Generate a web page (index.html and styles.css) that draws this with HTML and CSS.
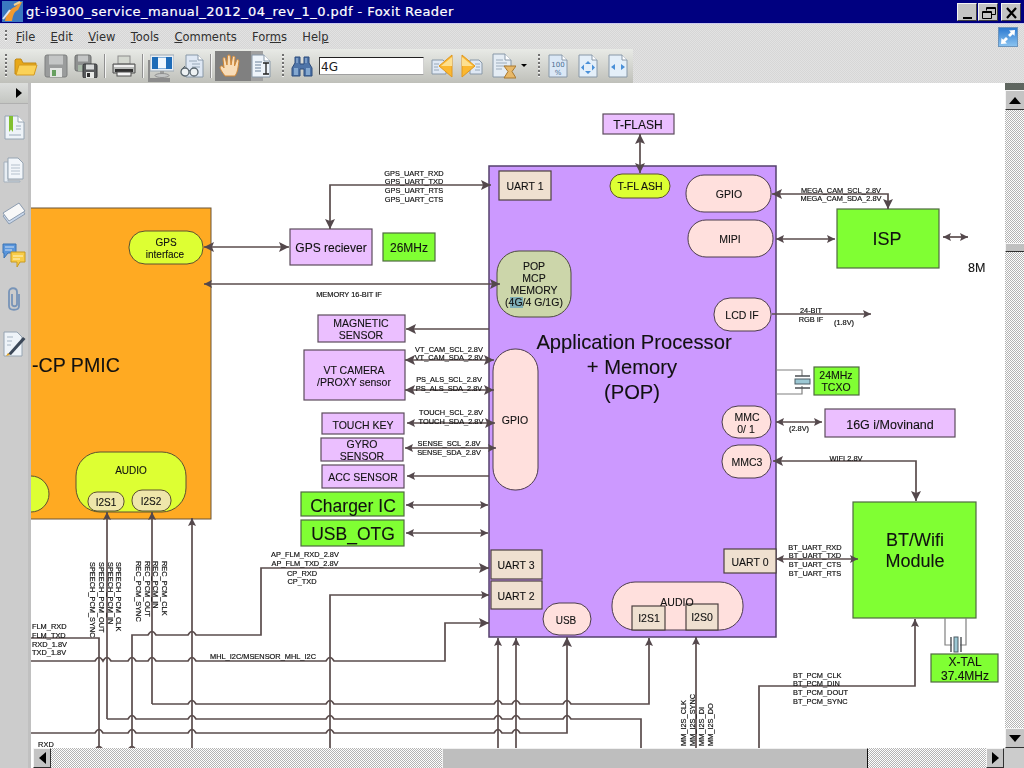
FILE: index.html
```html
<!DOCTYPE html>
<html lang="en">
<head>
<meta charset="utf-8">
<title>Foxit Reader</title>
<link rel="stylesheet" href="styles.css">
</head>
<body>
<div class="app">
  <header class="titlebar">
    <svg class="app-logo" width="21" height="21" viewBox="0 0 21 21"><rect width="21" height="21" fill="#3a78c0"/><path d="M3 20C4 12 9 7 13 6L18 1H20L16 9C13 10 11 13 10 20Z" fill="#f09a30"/><path d="M1 18L8 9" stroke="#dfe8f4" stroke-width="2"/><path d="M12 4L18 1" stroke="#f4d090" stroke-width="2"/></svg>
    <span class="title-text">gt-i9300_service_manual_2012_04_rev_1_0.pdf - Foxit Reader</span>
    <div class="win-buttons">
      <button class="win-btn"><svg width="20" height="18"><rect x="5" y="13" width="9" height="2" fill="#000"/></svg></button>
      <button class="win-btn"><svg width="20" height="18"><path d="M7.5 6.5V3.500H16.500V10.500H13M3.500 7.500H12.500V14.500H3.500ZM3.500 8.500H12.500M8 4.500H16" fill="none" stroke="#000"/></svg></button>
      <button class="win-btn win-close"><svg width="20" height="18"><path d="M5 4L14 14M14 4L5 14" stroke="#000" stroke-width="2.200"/></svg></button>
    </div>
  </header>

  <nav class="menubar">
    <span class="grip grip-menu"></span>
    <span class="menu-item"><u>F</u>ile</span>
    <span class="menu-item"><u>E</u>dit</span>
    <span class="menu-item"><u>V</u>iew</span>
    <span class="menu-item"><u>T</u>ools</span>
    <span class="menu-item"><u>C</u>omments</span>
    <span class="menu-item">For<u>m</u>s</span>
    <span class="menu-item">Hel<u>p</u></span>
    <svg class="expand-icon" width="20" height="20" viewBox="0 0 20 20"><defs><linearGradient id="ex" x1="0" y1="0" x2="0" y2="1"><stop offset="0" stop-color="#2a78d0"/><stop offset="1" stop-color="#8cc4f0"/></linearGradient></defs><rect x=".5" y=".5" width="19" height="19" fill="url(#ex)" stroke="#6c94bc"/><path d="M17 3L11 3.500L12.800 5.200L10 8L12 10L14.800 7.200L16.500 9ZM3 17L9 16.500L7.200 14.800L10 12L8 10L5.200 12.800L3.500 11Z" fill="#fff"/></svg>
  </nav>

  <div class="toolbar-row">
    <div class="toolbar">
      <span class="grip grip-tool"></span>
      <svg class="ml7" width="24" height="24" viewBox="0 0 24 24"><path d="M1 6V20H20L22 9H9L7 5H2Z" fill="#e8a818" stroke="#c08a18"/><path d="M5 11H23L20 21H2Z" fill="#fbd257" stroke="#d49a20"/></svg>
      <svg class="ml6" width="24" height="24" viewBox="0 0 24 24"><rect x="1" y="1" width="22" height="22" rx="2" fill="#9a9c9c" stroke="#7c7e7e"/><rect x="5" y="1.500" width="14" height="9" fill="#c4c6c6"/><rect x="6" y="14" width="12" height="9" fill="#e4e6e4"/><rect x="8" y="16" width="4" height="6" fill="#68a060"/></svg>
      <svg class="ml6" width="24" height="24" viewBox="0 0 24 24"><rect x="1" y="1" width="16" height="16" rx="2" fill="#8e9090" stroke="#6c6e6e"/><rect x="4" y="1.500" width="10" height="6" fill="#c4c6c6"/><rect x="4" y="11" width="9" height="6" fill="#a8b8a8"/><rect x="9" y="10" width="14" height="14" rx="1.500" fill="#585a5c" stroke="#303234"/><rect x="12" y="10.500" width="8" height="5" fill="#d8dada"/><rect x="12" y="18" width="8" height="6" fill="#e8eae8"/><rect x="13" y="19" width="3" height="4" fill="#303030"/></svg>
      <span class="sep ml6"></span>
      <svg class="ml6" width="24" height="24" viewBox="0 0 24 24"><rect x="6" y="2" width="12" height="8" fill="#d4d8d0" stroke="#8c8c8c"/><path d="M1 10H23V19H1Z" fill="#b8bab8" stroke="#505050"/><rect x="2" y="11" width="20" height="2" fill="#f0f0f0"/><rect x="3" y="15" width="18" height="3" fill="#303030"/><rect x="5" y="18" width="14" height="4" fill="#f4f4f4" stroke="#505050"/></svg>
      <span class="sep ml6"></span>
      <span class="monitor-wrap ml6"><svg width="24" height="24" viewBox="0 0 24 24"><rect x="0" y="1" width="24" height="16" fill="#e8eef4" stroke="#9ca8b4"/><rect x="2" y="3" width="20" height="12" fill="#1e6cb8"/><rect x="8" y="3.500" width="8" height="11" fill="#f0f6fc"/><rect x="10" y="17" width="4" height="3" fill="#9a9c9c"/><ellipse cx="12" cy="21.500" rx="7" ry="2" fill="#c4c6c6" stroke="#909090"/></svg></span>
      <svg class="ml6" width="24" height="24" viewBox="0 0 24 24"><path d="M6 1H18L23 6V23H6Z" fill="#dfe8f4" stroke="#8898a8"/><path d="M18 1V6H23" fill="#fff" stroke="#8898a8"/><path d="M9 7H17M12 10H20M12 13H20" stroke="#98a8b8"/><circle cx="5" cy="18" r="4" fill="#eef2f4" stroke="#58646c" stroke-width="1.300"/><circle cx="14" cy="18" r="4" fill="#eef2f4" stroke="#58646c" stroke-width="1.300"/><path d="M9 17Q9.500 16 10 17M1 16L5 12" fill="none" stroke="#58646c"/></svg>
      <span class="sep ml6"></span>
      <div class="active-tools">
        <svg class="hand" width="22" height="24" viewBox="0 0 22 24"><path d="M6 22C3 18 1 15 1 13C2 11 4 12 5 14L4 5C4 3 6 3 6.500 5L8 11L8.500 2C9 0.500 11 0.500 11.200 2L12 11L13.500 3C14 1.500 16 2 16 3.500L15.500 12L17.500 6.500C18 5 20 5.500 20 7C19 13 19 18 16 22Z" fill="#f8dcb8" stroke="#d08838"/></svg>
        <svg class="text-doc" width="20" height="24" viewBox="0 0 20 24"><path d="M1 1H13L19 7V23H1Z" fill="#eef4fa" stroke="#8898a8"/><path d="M13 1V7H19" fill="#fff" stroke="#8898a8"/><path d="M4 8H11M4 11H10M4 14H10M4 17H10" stroke="#6a8098"/><path d="M12 9H18M15 9V20M12 20H18" stroke="#202020" stroke-width="1.300" fill="none"/></svg>
      </div>
      <span class="grip grip-tool ml19"></span>
      <svg class="ml7" width="22" height="24" viewBox="0 0 22 24"><path d="M4 3H9V10H13V3H18V9L21 14V22H13V15H9V22H1V14L4 9Z" fill="#4e74a8" stroke="#2c4c7c"/><path d="M3 14H7V21H3ZM15 14H19V21H15Z" fill="#84a8d0"/><path d="M6 4V9M15 4V9" stroke="#a8c4e4"/></svg>
      <input class="find-box ml6" type="text" value="4G">
      <svg class="ml7" width="22" height="24" viewBox="0 0 22 24"><path d="M1 6H12L15 9V20H1Z" fill="#dfe8f4" stroke="#8898a8"/><path d="M3 10H8M3 13H7M3 16H8" stroke="#98a8b8"/><path d="M21 1V23L8 12Z" fill="#fbb830" stroke="#e09820"/><path d="M21 3V12H10Z" fill="#fde090"/></svg>
      <svg class="ml8" width="22" height="24" viewBox="0 0 22 24"><path d="M9 6H18L21 9V20H9Z" fill="#dfe8f4" stroke="#8898a8"/><path d="M14 10H19M15 13H19M14 16H19" stroke="#98a8b8"/><path d="M1 1V23L14 12Z" fill="#fbb830" stroke="#e09820"/><path d="M1 3V12H12Z" fill="#fde090"/></svg>
      <svg class="ml9" width="24" height="26" viewBox="0 0 24 26"><path d="M1 1H13L19 7V24H1Z" fill="#e4ecf4" stroke="#8898a8"/><path d="M13 1V7H19" fill="#fff" stroke="#8898a8"/><path d="M4 7H11M4 10H15M4 13H15M4 16H10" stroke="#9cacbc"/><path d="M12 13H24L20 18.500L24 25H12L16 18.500Z" fill="#e8b868" stroke="#a87830"/></svg>
      <svg class="ml5 caret" width="6" height="4"><path d="M0 0H6L3 3Z" fill="#000"/></svg>
      <span class="grip grip-tool ml11"></span>
      <svg class="ml8" width="20" height="24" viewBox="0 0 20 24"><path d="M1 1H14L19 6V23H1Z" fill="#dbe8f6" stroke="#8898a8"/><path d="M14 1V6H19" fill="#fff" stroke="#8898a8"/><text class="zoom-num" x="10" y="13">100</text><text class="zoom-num" x="10" y="21">%</text></svg>
      <svg class="ml10" width="20" height="24" viewBox="0 0 20 24"><path d="M1 1H14L19 6V23H1Z" fill="#e4eff9" stroke="#8898a8"/><path d="M14 1V6H19" fill="#fff" stroke="#8898a8"/><path d="M10 7L13 10H7ZM10 20L7 17H13ZM3 13.500L6 10.500V16.500ZM17 13.500L14 10.500V16.500Z" fill="#4a90d8"/></svg>
      <svg class="ml10" width="20" height="24" viewBox="0 0 20 24"><path d="M1 1H14L19 6V23H1Z" fill="#e4eff9" stroke="#8898a8"/><path d="M14 1V6H19" fill="#fff" stroke="#8898a8"/><path d="M3 13L7 10V16ZM17 13L13 10V16Z" fill="#4a90d8"/></svg>
    </div>
  </div>

  <main class="workspace">
    <aside class="sidebar">
      <div class="side-head"><svg width="6" height="10"><path d="M0 0L6 5L0 10Z" fill="#000"/></svg></div>
      <div class="side-icons">
        <svg width="22" height="26" viewBox="0 0 22 26"><path d="M2 2H15L21 8V25H2Z" fill="#eef3f8" stroke="#96a4b2"/><path d="M15 2V8H21" fill="#fff" stroke="#96a4b2"/><path d="M6 2H10V18L8 15.500L6 18Z" fill="#82c030"/><path d="M13 12H18M13 15H18M6 21H18" stroke="#9cacbc"/></svg>
        <svg width="22" height="26" viewBox="0 0 22 26"><path d="M1 5H5V24H17V25H1Z" fill="#e8eef4" stroke="#a4b0bc"/><path d="M5 1H15L20 6V22H5Z" fill="#f2f6fa" stroke="#96a4b2"/><path d="M8 8H17M8 11H17M8 14H17M8 17H17" stroke="#b4c0cc"/></svg>
        <svg width="24" height="26" viewBox="0 0 24 26"><path d="M1 16L17 6L23 14L7 24Z" fill="#c8d6ea" stroke="#8c9cb0"/><path d="M1 13L17 3L23 11L7 21Z" fill="#f8f8f8" stroke="#8c9cb0"/></svg>
        <svg width="24" height="26" viewBox="0 0 24 26"><path d="M1 1H14V10H6L2 15V10H1Z" fill="#5a96dc" stroke="#3c74b4"/><path d="M3 4H12M3 7H10" stroke="#cfe0f4"/><path d="M9 9H23V19H18L15 24V19H9Z" fill="#f8cc48" stroke="#c89a20"/><path d="M11 13H21M11 16H18" stroke="#fff4c8"/></svg>
        <svg width="18" height="28" viewBox="0 0 18 28"><path d="M14 8V20C14 25 4 25 4 20V6C4 1 12 1 12 6V18C12 21 7 21 7 18V8" fill="none" stroke="#7894b8" stroke-width="1.800"/></svg>
        <svg width="24" height="26" viewBox="0 0 24 26"><path d="M2 1H15L20 6V25H2Z" fill="#eef3f8" stroke="#96a4b2"/><path d="M5 6H11M5 10H10M5 14H9" stroke="#a8b6c4"/><path d="M6 23L21 6L23.500 8L9 24Z" fill="#3c4858"/><path d="M4 25L6 22L8 24Z" fill="#e0a020"/></svg>
      </div>
    </aside>

    <section class="canvas">
      <svg class="diagram" viewBox="31 83 973 665" width="973" height="665">
        <defs>
          <marker id="ah" markerUnits="userSpaceOnUse" markerWidth="12" markerHeight="12" refX="10" refY="5" orient="auto-start-reverse"><path class="head" d="M0 0L10 5L0 10L2 5Z"/></marker>
          <marker id="as" markerUnits="userSpaceOnUse" markerWidth="10" markerHeight="10" refX="8" refY="4" orient="auto-start-reverse"><path class="head" d="M0 0L8 4L0 8L1.500 4Z"/></marker>
        </defs>

        <!-- blocks -->
        <rect class="b-orange" x="20" y="208" width="191" height="311"/>
        <rect class="b-purple" x="489" y="166" width="287" height="471"/>

        <rect class="b-lilac" x="603" y="114" width="71" height="20"/>
        <rect class="b-tan" x="499" y="171" width="52" height="29"/>
        <rect class="b-yellow" x="610" y="174" width="60" height="24" rx="12"/>
        <rect class="b-pink" x="686" y="175" width="85" height="37" rx="18"/>
        <rect class="b-pink" x="688" y="220" width="85" height="37" rx="18"/>
        <rect class="b-green" x="837" y="209" width="102" height="59"/>
        <rect class="b-sage" x="497" y="251" width="74" height="66" rx="22"/>
        <rect class="b-hl" x="510" y="297" width="13" height="11"/>
        <rect class="b-pink" x="714" y="298" width="57" height="33" rx="16"/>
        <rect class="b-green" x="814" y="367" width="45" height="28"/>
        <rect class="b-pink" x="722" y="406" width="49" height="32" rx="16"/>
        <rect class="b-lilac" x="825" y="409" width="130" height="28"/>
        <rect class="b-pink" x="722" y="445" width="49" height="33" rx="16"/>
        <rect class="b-green" x="853" y="502" width="123" height="116"/>
        <rect class="b-tan" x="724" y="549" width="52" height="24"/>
        <rect class="b-pink" x="612" y="582" width="131" height="48" rx="23"/>
        <rect class="b-tan" x="632" y="606" width="33" height="24"/>
        <rect class="b-tan" x="686" y="604" width="32" height="26"/>
        <rect class="b-pink" x="543" y="603" width="48" height="32" rx="16"/>
        <rect class="b-tan" x="491" y="550" width="51" height="29"/>
        <rect class="b-tan" x="491" y="581" width="51" height="28"/>
        <rect class="b-pink" x="493" y="349" width="45" height="141" rx="22"/>
        <rect class="b-lilac" x="304" y="350" width="101" height="50"/>
        <rect class="b-lilac" x="318" y="315" width="87" height="27"/>
        <rect class="b-lilac" x="290" y="229" width="82" height="36"/>
        <rect class="b-green" x="383" y="233" width="52" height="28"/>
        <rect class="b-lilac" x="322" y="413" width="82" height="21"/>
        <rect class="b-lilac" x="321" y="438" width="82" height="23"/>
        <rect class="b-lilac" x="322" y="465" width="82" height="23"/>
        <rect class="b-green" x="301" y="492" width="103" height="24"/>
        <rect class="b-green" x="301" y="520" width="103" height="26"/>
        <rect class="b-green" x="931" y="654" width="67" height="28"/>
        <rect class="b-yellow" x="129" y="231" width="74" height="33" rx="16"/>
        <rect class="b-yellow" x="76" y="452" width="110" height="60" rx="24"/>
        <rect class="b-cream" x="88" y="492" width="36" height="19" rx="9"/>
        <rect class="b-cream" x="132" y="490" width="39" height="21" rx="10"/>
        <rect class="b-yellow" x="10" y="476" width="39" height="36" rx="18"/>

        <!-- crystals -->
        <path class="thin" d="M776 370H802V376M776 394H802V386M945 618V645H952M966 618V645H960"/>
        <rect class="crystal" x="795" y="379" width="15" height="5"/>
        <path class="crystal-plate" d="M795 376H810M795 388H810"/>
        <rect class="crystal" x="954" y="637" width="4" height="15"/>
        <path class="crystal-plate" d="M951 637V652M961 637V652"/>

        <!-- wires -->
        <path class="wire" marker-start="url(#ah)" marker-end="url(#ah)" d="M640 134V173"/>
        <path class="wire" marker-start="url(#ah)" marker-end="url(#ah)" d="M491 185H330V229"/>
        <path class="wire" marker-start="url(#ah)" marker-end="url(#ah)" d="M772 194H888V209"/>
        <path class="wire" marker-start="url(#as)" marker-end="url(#as)" d="M776 239H835"/>
        <path class="wire" marker-start="url(#as)" marker-end="url(#as)" d="M943 237H968"/>
        <path class="wire" marker-start="url(#ah)" marker-end="url(#ah)" d="M204 247H289"/>
        <path class="wire" marker-start="url(#as)" marker-end="url(#ah)" d="M204 284H500"/>
        <path class="wire" marker-end="url(#ah)" d="M489 329H406"/>
        <path class="wire" marker-start="url(#ah)" marker-end="url(#ah)" d="M405 360H494"/>
        <path class="wire" marker-start="url(#ah)" marker-end="url(#ah)" d="M405 390H494"/>
        <path class="wire" marker-start="url(#as)" marker-end="url(#ah)" d="M407 423H495"/>
        <path class="wire" marker-start="url(#as)" marker-end="url(#as)" d="M405 448H496"/>
        <path class="wire" marker-end="url(#as)" d="M489 476H407"/>
        <path class="wire" marker-start="url(#as)" marker-end="url(#as)" d="M406 505H488"/>
        <path class="wire" marker-start="url(#as)" marker-end="url(#as)" d="M406 533H488"/>
        <path class="wire" marker-end="url(#as)" d="M772 314H871"/>
        <path class="wire" marker-start="url(#as)" marker-end="url(#as)" d="M776 422H822"/>
        <path class="wire" marker-start="url(#ah)" marker-end="url(#ah)" d="M773 461H916V501"/>
        <path class="wire" marker-start="url(#as)" marker-end="url(#as)" d="M776 559H858"/>
        <path class="wire" marker-end="url(#as)" d="M107 719V512"/>
        <path class="wire" marker-end="url(#as)" d="M152 704V512"/>
        <path class="wire" marker-end="url(#as)" d="M192 748V518"/>
        <path class="wire" d="M31 638H99V748"/>
        <path class="wire" marker-end="url(#ah)" d="M132 748V635H148q4-7 8 0H188q4-7 8 0H261V568H489"/>
        <path class="wire" marker-end="url(#as)" d="M330 748V595H489"/>
        <path class="wire" marker-end="url(#ah)" d="M31 661H95q4-7 8 0q4-7 8 0H128q4-7 8 0H148q4-7 8 0H188q4-7 8 0H326q4-7 8 0H445V623H489"/>
        <path class="wire" marker-end="url(#as)" d="M152 704H188q4-7 8 0H326q4-7 8 0H494q4-7 8 0H512q4-7 8 0H563q4-7 8 0H649V638"/>
        <path class="wire" d="M107 719H128q4-7 8 0H188q4-7 8 0H326q4-7 8 0H494q4-7 8 0H512q4-7 8 0H563q4-7 8 0H641V748"/>
        <path class="wire" marker-end="url(#ah)" d="M31 733H95q4-7 8 0H128q4-7 8 0H188q4-7 8 0H326q4-7 8 0H494q4-7 8 0H512q4-7 8 0H567V637"/>
        <path class="wire" d="M31 750H95q4-7 8 0H128q4-7 8 0H140"/>
        <path class="wire" marker-end="url(#as)" d="M498 748V638"/>
        <path class="wire" marker-end="url(#as)" d="M516 748V638"/>
        <path class="wire" marker-end="url(#as)" d="M696 748V637"/>
        <path class="wire" marker-end="url(#as)" d="M759 748V686H915V619"/>

        <!-- block labels -->
        <text class="t12 mid" x="638" y="129">T-FLASH</text>
        <text class="t11 mid" x="525" y="190">UART 1</text>
        <text class="t11 mid" x="640" y="190">T-FL ASH</text>
        <text class="t11 mid" x="729" y="198">GPIO</text>
        <text class="t11 mid" x="730" y="243">MIPI</text>
        <text class="t18 mid" x="887" y="245">ISP</text>
        <text class="t13" x="968" y="272">8M</text>
        <text class="t11 mid" x="534" y="270">POP</text>
        <text class="t11 mid" x="534" y="282">MCP</text>
        <text class="t11 mid" x="534" y="294">MEMORY</text>
        <text class="t11 mid" x="534" y="306">(4G/4 G/1G)</text>
        <text class="t-big mid" x="634" y="349">Application Processor</text>
        <text class="t-big mid" x="632" y="374">+ Memory</text>
        <text class="t-big mid" x="632" y="399">(POP)</text>
        <text class="t11 mid" x="742" y="319">LCD IF</text>
        <text class="t-tcxo mid" x="836" y="379">24MHz</text>
        <text class="t-tcxo mid" x="836" y="391">TCXO</text>
        <text class="t11 mid" x="747" y="421">MMC</text>
        <text class="t11 mid" x="746" y="433">0/ 1</text>
        <text class="t13 mid" x="890" y="429">16G i/Movinand</text>
        <text class="t11 mid" x="747" y="466">MMC3</text>
        <text class="t18 mid" x="915" y="546">BT/Wifi</text>
        <text class="t18 mid" x="915" y="567">Module</text>
        <text class="t11 mid" x="750" y="566">UART 0</text>
        <text class="t11 mid" x="677" y="606">AUDIO</text>
        <text class="t11 mid" x="649" y="622">I2S1</text>
        <text class="t11 mid" x="702" y="621">I2S0</text>
        <text class="t10 mid" x="566" y="624">USB</text>
        <text class="t11 mid" x="516" y="569">UART 3</text>
        <text class="t11 mid" x="516" y="600">UART 2</text>
        <text class="t11 mid" x="515" y="424">GPIO</text>
        <text class="t11 mid" x="354" y="374">VT CAMERA</text>
        <text class="t11 mid" x="354" y="386">/PROXY sensor</text>
        <text class="t11 mid" x="361" y="327">MAGNETIC</text>
        <text class="t11 mid" x="361" y="339">SENSOR</text>
        <text class="t12 mid" x="331" y="252">GPS reciever</text>
        <text class="t12 mid" x="409" y="252">26MHz</text>
        <text class="t11 mid" x="363" y="429">TOUCH KEY</text>
        <text class="t11 mid" x="362" y="448">GYRO</text>
        <text class="t11 mid" x="362" y="460">SENSOR</text>
        <text class="t11 mid" x="363" y="481">ACC SENSOR</text>
        <text class="t17 mid" x="353" y="512">Charger IC</text>
        <text class="t17 mid" x="353" y="540">USB_OTG</text>
        <text class="t12 mid" x="965" y="666">X-TAL</text>
        <text class="t12 mid" x="965" y="680">37.4MHz</text>
        <text class="t10 mid" x="166" y="246">GPS</text>
        <text class="t10 mid" x="165" y="258">interface</text>
        <text class="t-pmic" x="32" y="372">-CP PMIC</text>
        <text class="t10 mid" x="131" y="474">AUDIO</text>
        <text class="t10 mid" x="106" y="506">I2S1</text>
        <text class="t10 mid" x="151" y="505">I2S2</text>

        <!-- signal labels -->
        <text class="sig mid" x="414" y="176">GPS_UART_RXD</text>
        <text class="sig mid" x="414" y="184">GPS_UART_TXD</text>
        <text class="sig mid" x="414" y="193">GPS_UART_RTS</text>
        <text class="sig mid" x="414" y="202">GPS_UART_CTS</text>
        <text class="sig mid" x="349" y="297">MEMORY 16-BIT IF</text>
        <text class="sig mid" x="449" y="352">VT_CAM_SCL_2.8V</text>
        <text class="sig mid" x="449" y="360">VT_CAM_SDA_2.8V</text>
        <text class="sig mid" x="449" y="382">PS_ALS_SCL_2.8V</text>
        <text class="sig mid" x="449" y="391">PS_ALS_SDA_2.8V</text>
        <text class="sig mid" x="451" y="415">TOUCH_SCL_2.8V</text>
        <text class="sig mid" x="451" y="424">TOUCH_SDA_2.8V</text>
        <text class="sig mid" x="449" y="446">SENSE_SCL_2.8V</text>
        <text class="sig mid" x="449" y="455">SENSE_SDA_2.8V</text>
        <text class="sig mid" x="841" y="193">MEGA_CAM_SCL_2.8V</text>
        <text class="sig mid" x="841" y="201">MEGA_CAM_SDA_2.8V</text>
        <text class="sig mid" x="811" y="313">24-BIT</text>
        <text class="sig mid" x="811" y="322">RGB IF</text>
        <text class="sig mid" x="844" y="325">(1.8V)</text>
        <text class="sig mid" x="799" y="431">(2.8V)</text>
        <text class="sig mid" x="846" y="461">WIFI 2.8V</text>
        <text class="sig mid" x="815" y="550">BT_UART_RXD</text>
        <text class="sig mid" x="815" y="558">BT_UART_TXD</text>
        <text class="sig mid" x="815" y="567">BT_UART_CTS</text>
        <text class="sig mid" x="815" y="576">BT_UART_RTS</text>
        <text class="sig" x="793" y="678">BT_PCM_CLK</text>
        <text class="sig" x="793" y="686">BT_PCM_DIN</text>
        <text class="sig" x="793" y="695">BT_PCM_DOUT</text>
        <text class="sig" x="793" y="704">BT_PCM_SYNC</text>
        <text class="sig mid" x="305" y="557">AP_FLM_RXD_2.8V</text>
        <text class="sig mid" x="305" y="566">AP_FLM_TXD_2.8V</text>
        <text class="sig mid" x="302" y="576">CP_RXD</text>
        <text class="sig mid" x="302" y="584">CP_TXD</text>
        <text class="sig mid" x="263" y="659">MHL_I2C/MSENSOR_MHL_I2C</text>
        <text class="sig" x="32" y="629">FLM_RXD</text>
        <text class="sig" x="32" y="638">FLM_TXD</text>
        <text class="sig" x="32" y="647">RXD_1.8V</text>
        <text class="sig" x="32" y="655">TXD_1.8V</text>
        <text class="sig" x="34" y="746.500">_RXD</text>
        <text class="sig" transform="translate(116 562) rotate(90)">SPEECH_PCM_CLK</text>
        <text class="sig" transform="translate(108 562) rotate(90)">SPEECH_PCM_IN</text>
        <text class="sig" transform="translate(99 562) rotate(90)">SPEECH_PCM_OUT</text>
        <text class="sig" transform="translate(90 562) rotate(90)">SPEECH_PCM_SYNC</text>
        <text class="sig" transform="translate(162 561) rotate(90)">REC_PCM_CLK</text>
        <text class="sig" transform="translate(153 561) rotate(90)">REC_PCM_IN</text>
        <text class="sig" transform="translate(145 561) rotate(90)">REC_PCM_OUT</text>
        <text class="sig" transform="translate(136 561) rotate(90)">REC_PCM_SYNC</text>
        <text class="sig" transform="translate(686 746) rotate(-90)">MM_I2S_CLK</text>
        <text class="sig" transform="translate(695 746) rotate(-90)">MM_I2S_SYNC</text>
        <text class="sig" transform="translate(704 746) rotate(-90)">MM_I2S_DI</text>
        <text class="sig" transform="translate(713 746) rotate(-90)">MM_I2S_DO</text>
      </svg>
    </section>

    <div class="vscroll">
      <div class="v-cap"></div>
      <button class="sb-btn"><svg width="12" height="7"><path d="M0 7L6 0L12 7Z" fill="#000"/></svg></button>
      <div class="track">
        <div class="v-thumb"></div>
      </div>
      <button class="sb-btn"><svg width="12" height="7"><path d="M0 0L6 7L12 0Z" fill="#000"/></svg></button>
    </div>

    <div class="hscroll">
      <button class="sb-btn"><svg width="7" height="12"><path d="M7 0L0 6L7 12Z" fill="#000"/></svg></button>
      <div class="track track-left"></div>
      <div class="h-thumb"></div>
      <div class="track"></div>
      <button class="sb-btn"><svg width="7" height="12"><path d="M0 0L7 6L0 12Z" fill="#000"/></svg></button>
    </div>
    <div class="corner"></div>
  </main>
</div>
</body>
</html>
```

FILE: styles.css
```css
* { box-sizing: border-box; }
html, body { margin: 0; padding: 0; }
body { width: 1024px; height: 768px; overflow: hidden; background: #fff; font-family: "DejaVu Sans", sans-serif; }
svg { display: block; flex: none; }
.app { width: 1024px; height: 768px; display: flex; flex-direction: column; }

.titlebar { height: 24px; background: #000080; border-bottom: 1px solid #c8c8ee; display: flex; align-items: center; padding-left: 2px; color: #fff; }
.title-text { margin-left: 3px; font-size: 13px; letter-spacing: .45px; -webkit-text-stroke: .2px #fff; white-space: nowrap; }
.win-buttons { margin-left: auto; display: flex; gap: 1px; padding-right: 3px; }
.win-btn { width: 20px; height: 18px; padding: 0; background: #c4c4c4; border: 1px solid; border-color: #f4f4f4 #404040 #404040 #f4f4f4; }
.win-close { margin-left: 2px; }

.menubar, .toolbar-row { background-color: #dcdcdc; background-image: conic-gradient(#d6d6d6 25%, #e2e2e2 0 50%, #d6d6d6 0 75%, #e2e2e2 0); background-size: 2px 2px; }
.menubar { height: 25px; display: flex; align-items: center; gap: 15.3px; position: relative; font-size: 11.5px; color: #303030; padding-left: 16px; }
.grip { display: block; width: 2px; background-image: repeating-linear-gradient(#707070 0 2px, #f4f4f4 2px 3px, transparent 3px 4px); }
.grip-menu { position: absolute; left: 5px; top: 6px; height: 12px; }
.expand-icon { position: absolute; left: 998px; top: 3px; }
.menu-item { white-space: nowrap; }

.toolbar-row { height: 34px; }
.toolbar { width: 633px; height: 34px; display: flex; align-items: center; background: linear-gradient(#e8eae6, #bfc0ba); padding-left: 5px; }
.grip-tool { height: 24px; }
.sep { display: block; width: 2px; height: 24px; background: linear-gradient(90deg, #909090 50%, #f4f4f4 50%); }
.ml5 { margin-left: 5px; } .ml6 { margin-left: 6px; } .ml7 { margin-left: 7px; } .ml8 { margin-left: 8px; }
.ml9 { margin-left: 9px; } .ml10 { margin-left: 10px; } .ml11 { margin-left: 11px; } .ml19 { margin-left: 19px; }
.monitor-wrap { display: block; box-shadow: -3px 5px 0 -1px #8c8c8c; }
.active-tools { margin-left: 3px; width: 48px; height: 30px; background: linear-gradient(90deg, #808080 0 36px, #a0a0a0 36px); display: flex; align-items: center; padding-left: 4px; }
.text-doc { margin-left: 10px; }
.find-box { width: 105px; height: 18px; padding: 1px 1px 0; border: 1px solid; border-color: #202020 #d0d0d0 #a0a0a0 #404040; background: #fff; font: 12px "DejaVu Sans", sans-serif; color: #202020; }
.caret { align-self: center; }
.zoom-num { font-family: "DejaVu Sans", sans-serif; font-size: 7px; text-anchor: middle; fill: #4a6c90; }

.workspace { flex: 1; display: grid; grid-template-columns: 31px 973px 20px; grid-template-rows: 665px 20px; min-height: 0; }
.sidebar { grid-row: 1 / 3; background: #cccccc; border-right: 3px solid; border-image: linear-gradient(90deg, #e0e0e0 33%, #8c8c8c 33% 66%, #c0c0c0 66%) 1; }
.side-head { height: 21px; background: linear-gradient(#dcdedc, #c4c6c2); border-bottom: 1px solid #b0b0b0; display: flex; align-items: center; justify-content: center; padding-left: 9px; }
.side-icons { display: flex; flex-direction: column; align-items: center; gap: 17px; padding-top: 10px; }

.canvas { overflow: hidden; background: #fff; }
.diagram { filter: blur(.35px); }
.b-orange { fill: #ffaa22; stroke: #6a5438; }
.b-purple { fill: #cc99ff; stroke: #54406c; stroke-width: 1.500; }
.b-lilac { fill: #ebbfff; stroke: #5c4c5c; stroke-width: 1.200; }
.b-tan { fill: #efe0d0; stroke: #4c4040; stroke-width: 1.200; }
.b-yellow { fill: #ddff33; stroke: #5c5030; }
.b-pink { fill: #ffe0dd; stroke: #4c3c4c; }
.b-green { fill: #80ff33; stroke: #4f6a40; stroke-width: 1.200; }
.b-sage { fill: #ccd6aa; stroke: #4c4c3c; }
.b-cream { fill: #eee6aa; stroke: #5c5030; }
.b-hl { fill: #7fb0b8; }
.thin { fill: none; stroke: #808080; stroke-width: 1.200; }
.crystal { fill: #9cc8d4; stroke: #4c5c64; }
.crystal-plate { fill: none; stroke: #4c5054; stroke-width: 1.400; }
.wire { fill: none; stroke: #5a4c4c; stroke-width: 1.700; }
.head { fill: #54484c; }

.diagram text { font-family: "Liberation Sans", Arial, sans-serif; fill: #111; stroke: #111; stroke-width: .1px; }
.mid { text-anchor: middle; }
.t10 { font-size: 10px; }
.t11 { font-size: 10.500px; }
.t12 { font-size: 12px; }
.t13 { font-size: 12.500px; }
.t17 { font-size: 17.500px; }
.t18 { font-size: 18px; }
.t-big { font-size: 20.200px; }
.t-pmic { font-size: 19.600px; }
.t-tcxo { font-size: 10.500px; }
.diagram .sig { font-size: 7.400px; stroke-width: .18px; }

.track { flex: 1; background-color: #fff; background-image: conic-gradient(#b4b4b4 25%, #fff 0 50%, #b4b4b4 0 75%, #fff 0); background-size: 2px 2px; }
.sb-btn { flex: none; display: flex; align-items: center; justify-content: center; padding: 0; width: 20px; height: 20px; background: #c4c4c4; border: 1px solid; border-color: #f4f4f4 #303030 #303030 #f4f4f4; }
.vscroll { grid-column: 3; grid-row: 1; display: flex; flex-direction: column; border-left: 1px solid #fff; }
.v-cap { height: 7px; background: #5f6660; }
.vscroll .track { position: relative; }
.v-thumb { position: absolute; top: 133px; left: 0; width: 20px; height: 9px; background: #c0c0c0; border: 1px solid; border-color: #f4f4f4 #303030 #303030 #f4f4f4; }
.hscroll { grid-column: 2; grid-row: 2; display: flex; padding-left: 2px; }
.hscroll .sb-btn { width: 18px; }
.track-left { flex: none; width: 391px; }
.h-thumb { width: 426px; background: #bebebe; border-top: 1px solid #f0f0f0; border-left: 1px solid #f0f0f0; border-right: 1px solid #101010; }
.corner { grid-column: 3; grid-row: 2; background: #cccccc; }
```
